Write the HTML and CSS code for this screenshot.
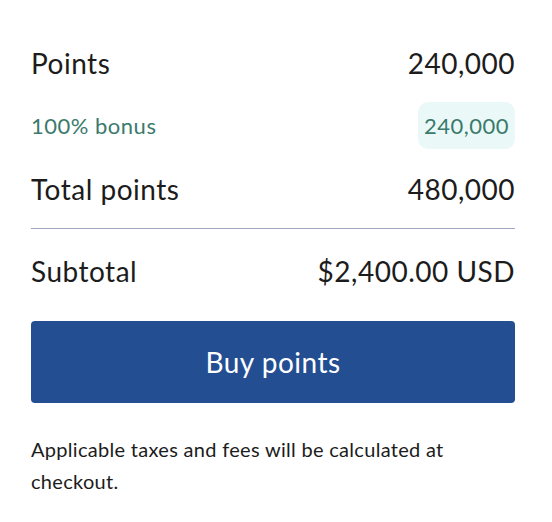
FILE: index.html
```html
<!DOCTYPE html>
<html lang="en">
<head>
  <meta charset="UTF-8">
  <meta name="viewport" content="width=device-width, initial-scale=1.0">
  <title>Buy Points</title>
  <link rel="stylesheet" href="styles.css">
</head>
<body>
  <div class="summary">
    <div class="row">
      <span class="label">Points</span>
      <span class="value">240,000</span>
    </div>

    <div class="row bonus">
      <span class="label">100% bonus</span>
      <span class="value badge">240,000</span>
    </div>

    <div class="row">
      <span class="label">Total points</span>
      <span class="value">480,000</span>
    </div>

    <hr class="divider">

    <div class="row">
      <span class="label">Subtotal</span>
      <span class="value">$2,400.00 USD</span>
    </div>

    <button class="btn">Buy points</button>

    <p class="note">Applicable taxes and fees will be calculated at checkout.</p>
  </div>
</body>
</html>
```

FILE: styles.css
```css
/* Base styles */
body {
  margin: 0;
  padding: 0;
  background-color: #FFFFFF;
  font-family: 'Lato', 'Liberation Sans', sans-serif;
  color: #1C1C1C;
}

.summary {
  display: flex;
  flex-direction: column;
  width: 484px;
  padding: 39px 0 0 31px;
}

/* Summary rows */
.row {
  display: flex;
  justify-content: space-between;
  align-items: center;
  min-height: 47px;
  font-size: 28px;
  letter-spacing: 0.5px;
}

.row + .row {
  margin-top: 16px;
}

.bonus {
  font-size: 22px;
  color: #3B7A6C;
}

.badge {
  display: flex;
  align-items: center;
  height: 47px;
  padding: 0 6px;
  background-color: #EAF9F8;
  border-radius: 10px;
}

.divider {
  width: 100%;
  height: 1px;
  margin: 16px 0 18px;
  border: none;
  background-color: #A3A9C2;
}

/* Button */
.btn {
  height: 82px;
  margin-top: 27px;
  border: none;
  border-radius: 4px;
  background-color: #234E92;
  color: #FFFFFF;
  font-family: inherit;
  font-size: 28px;
  letter-spacing: 0.5px;
  cursor: pointer;
}

.note {
  margin: 30px 0 0;
  padding-right: 40px;
  font-size: 20px;
  line-height: 32px;
  letter-spacing: 0.3px;
}
```
